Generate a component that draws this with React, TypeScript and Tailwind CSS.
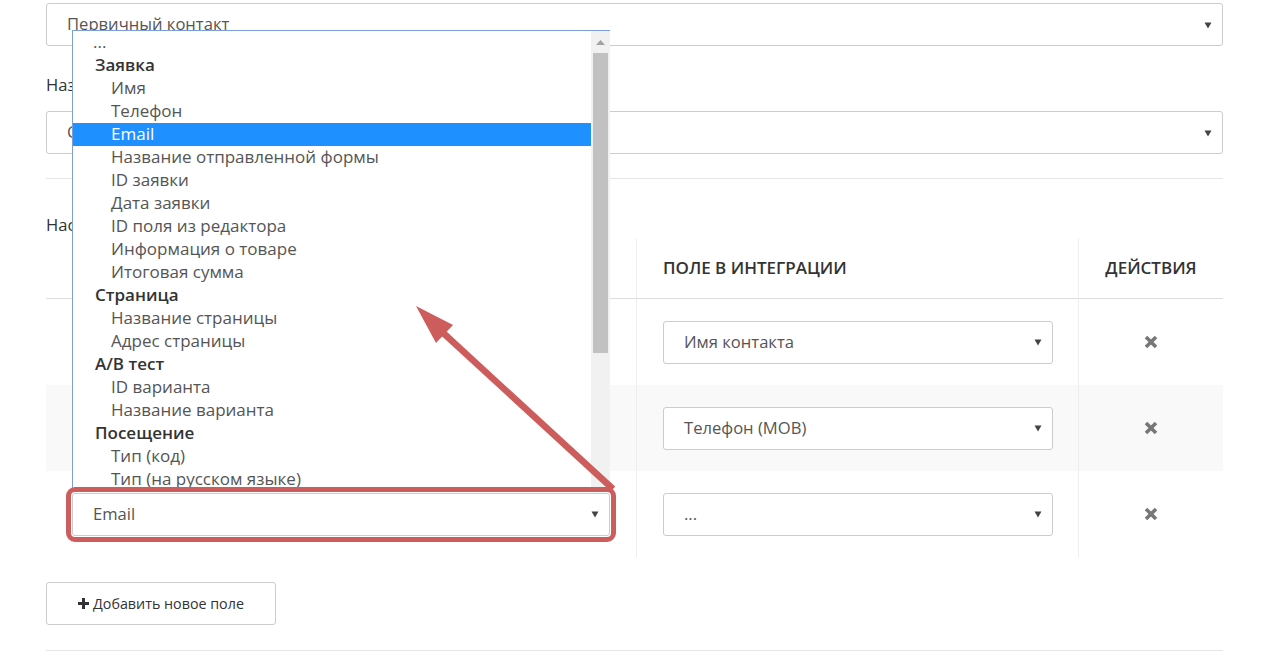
import clsx from "clsx";

type Item = { label: string; kind: "empty" | "group" | "option"; active?: boolean };

const items: Item[] = [
  { label: "...", kind: "empty" },
  { label: "Заявка", kind: "group" },
  { label: "Имя", kind: "option" },
  { label: "Телефон", kind: "option" },
  { label: "Email", kind: "option", active: true },
  { label: "Название отправленной формы", kind: "option" },
  { label: "ID заявки", kind: "option" },
  { label: "Дата заявки", kind: "option" },
  { label: "ID поля из редактора", kind: "option" },
  { label: "Информация о товаре", kind: "option" },
  { label: "Итоговая сумма", kind: "option" },
  { label: "Страница", kind: "group" },
  { label: "Название страницы", kind: "option" },
  { label: "Адрес страницы", kind: "option" },
  { label: "A/B тест", kind: "group" },
  { label: "ID варианта", kind: "option" },
  { label: "Название варианта", kind: "option" },
  { label: "Посещение", kind: "group" },
  { label: "Тип (код)", kind: "option" },
  { label: "Тип (на русском языке)", kind: "option" },
];

const rows = [
  { form: "Имя", target: "Имя контакта" },
  { form: "Телефон", target: "Телефон (МОВ)" },
  { form: "Email", target: "...", marked: true },
];

function Caret() {
  return (
    <svg width="8" height="8" viewBox="0 0 8 8" className="shrink-0">
      <path d="M0.5 1.5 H7.5 L4 7.5 Z" fill="#444" />
    </svg>
  );
}

function Select({ value, className }: { value: string; className?: string }) {
  return (
    <div
      className={clsx(
        "flex h-[43px] items-center justify-between rounded-[3px] border border-[#ccc] bg-white pl-[20px] pr-[10px] text-[16.6px] text-[#555]",
        className
      )}
    >
      <span>{value}</span>
      <Caret />
    </div>
  );
}

function RemoveIcon() {
  return (
    <svg width="14" height="14" viewBox="0 0 14 14">
      <path d="M2 2 L12 12 M12 2 L2 12" stroke="#777" strokeWidth="3.6" />
    </svg>
  );
}

function OptionList() {
  return (
    <div className="absolute left-[26px] top-[30px] z-10 flex h-[458px] w-[538px] overflow-hidden border-l border-t border-[#7b9fd8] bg-white">
      <div className="flex-1">
        {items.map((it) => (
          <div
            key={it.label}
            className={clsx(
              "flex h-[23px] items-center whitespace-nowrap pb-[2px] text-[17px] leading-[21px]",
              it.kind === "empty" && "pl-[20px] text-[#555]",
              it.kind === "group" && "pl-[22px] font-semibold text-[#333]",
              it.kind === "option" && "pl-[38px] text-[#555]",
              it.active && "bg-[#1e90ff] text-white"
            )}
          >
            {it.label}
          </div>
        ))}
      </div>
      {/* scrollbar */}
      <div className="flex w-[19px] flex-col bg-[#f1f1f1]">
        <div className="flex h-[22px] items-center justify-center">
          <svg width="9" height="5" viewBox="0 0 9 5">
            <path d="M0 5 L4.5 0 L9 5 Z" fill="#a3a3a3" />
          </svg>
        </div>
        <div className="mx-[2px] h-[300px] bg-[#c1c1c1]" />
      </div>
    </div>
  );
}

function Arrow() {
  return (
    <svg className="pointer-events-none absolute left-0 top-0 z-30" width="1273" height="656">
      <line x1="613" y1="489" x2="440" y2="330" stroke="#cd5c5c" strokeWidth="6.5" />
      <path d="M416 306 L453 325 L436 343 Z" fill="#cd5c5c" />
    </svg>
  );
}

export default function App() {
  return (
    <div className="relative min-h-screen overflow-hidden bg-white font-['Open_Sans',sans-serif] text-[#333]">
      <div className="relative ml-[46px] w-[1177px] pt-[3px]">
        <Select value="Первичный контакт" />
        <div className="mt-[28px] h-[22px] text-[16.6px] leading-[22px]">Название сделки</div>
        <Select value="Создать новую сделку" className="mt-[15px]" />
        <div className="mt-[24px] border-t border-[#e5e5e5]" />
        <div className="mt-[35px] h-[22px] text-[16.6px] leading-[22px]">Настройка полей</div>

        <div className="mt-[2px] grid grid-cols-[590px_442px_1fr]">
          <div className="flex h-[61px] items-center border-b border-[#ddd] px-[26px] text-[17px] font-semibold uppercase">
            Поле в форме
          </div>
          <div className="flex h-[61px] items-center border-b border-l border-[#ddd] border-l-[#eee] px-[26px] text-[17px] font-semibold uppercase">
            Поле в интеграции
          </div>
          <div className="flex h-[61px] items-center justify-center border-b border-l border-[#ddd] border-l-[#eee] text-[17px] font-semibold uppercase">
            Действия
          </div>

          {rows.map((r, i) => (
            <div key={r.form} className="contents">
              <div className={clsx("flex h-[86px] items-center pl-[26px] pr-[26px]", i === 1 && "bg-[#f9f9f9]")}>
                <Select
                  value={r.form}
                  className={clsx(
                    "w-full",
                    r.marked && "relative z-20 outline-[5px] outline-offset-[1px] outline-[#cd5c5c] outline-solid"
                  )}
                />
              </div>
              <div className={clsx("flex h-[86px] items-center border-l border-[#eee] pl-[26px] pr-[25px]", i === 1 && "bg-[#f9f9f9]")}>
                <Select value={r.target} className="w-full" />
              </div>
              <div className={clsx("flex h-[86px] items-center justify-center border-l border-[#eee]", i === 1 && "bg-[#f9f9f9]")}>
                <RemoveIcon />
              </div>
            </div>
          ))}
        </div>

        <button className="mt-[25px] flex h-[43px] w-[230px] items-center justify-center gap-[4px] rounded-[3px] border border-[#ccc] bg-white text-[14.3px] font-medium text-[#333]">
          <svg width="11" height="11" viewBox="0 0 11 11">
            <path d="M5.5 0 V11 M0 5.5 H11" stroke="#333" strokeWidth="3" />
          </svg>
          Добавить новое поле
        </button>
        <div className="mt-[25px] border-t border-[#e5e5e5]" />

        <OptionList />
      </div>
      <Arrow />
    </div>
  );
}
